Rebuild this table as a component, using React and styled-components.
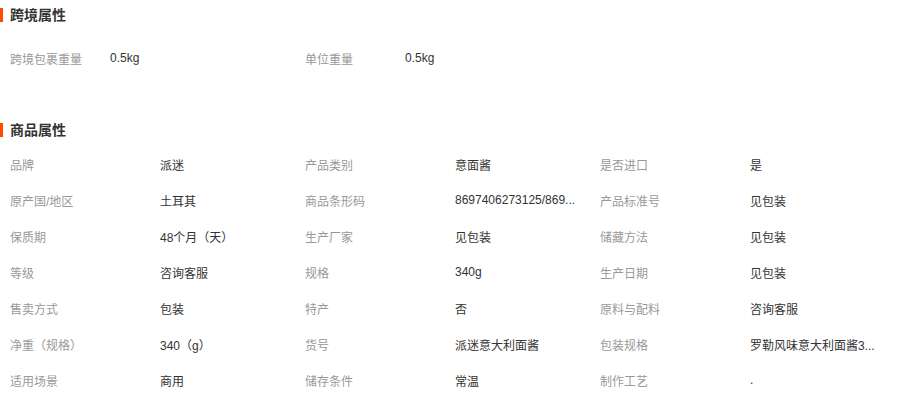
import React from "react";
import styled, { createGlobalStyle } from "styled-components";

const GlobalStyle = createGlobalStyle`
  body {
    margin: 0;
    background: #fff;
    font-family: "Liberation Sans", "Noto Sans CJK SC", sans-serif;
    font-size: 12px;
  }
`;

const Wrapper = styled.div`
  width: 898px;
`;

const SectionTitle = styled.div`
  position: relative;
  margin-top: ${(p) => p.top}px;
  padding-left: 10px;
  height: 14px;
  line-height: 14px;
  font-size: 14px;
  font-weight: bold;
  color: #333;
  &::before {
    content: "";
    position: absolute;
    left: 0;
    top: 0;
    width: 3px;
    height: 14px;
    background: #ff4a00;
  }
`;

const Grid = styled.div`
  display: grid;
  grid-template-columns: repeat(3, 295px);
  margin-top: ${(p) => p.top}px;
`;

const Cell = styled.div`
  display: flex;
  align-items: center;
  height: 36px;
  padding-left: 10px;
`;

const Label = styled.span`
  flex: 0 0 ${(p) => p.w}px;
  color: #999;
  white-space: nowrap;
`;

const Value = styled.span`
  max-width: 140px;
  color: #333;
  white-space: nowrap;
  overflow: hidden;
  text-overflow: ellipsis;
`;

const crossBorder = [
  ["跨境包裹重量", "0.5kg"],
  ["单位重量", "0.5kg"],
];

const goods = [
  ["品牌", "派迷"],
  ["产品类别", "意面酱"],
  ["是否进口", "是"],
  ["原产国/地区", "土耳其"],
  ["商品条形码", "8697406273125/869..."],
  ["产品标准号", "见包装"],
  ["保质期", "48个月（天）"],
  ["生产厂家", "见包装"],
  ["储藏方法", "见包装"],
  ["等级", "咨询客服"],
  ["规格", "340g"],
  ["生产日期", "见包装"],
  ["售卖方式", "包装"],
  ["特产", "否"],
  ["原料与配料", "咨询客服"],
  ["净重（规格）", "340（g）"],
  ["货号", "派迷意大利面酱"],
  ["包装规格", "罗勒风味意大利面酱3..."],
  ["适用场景", "商用"],
  ["储存条件", "常温"],
  ["制作工艺", "."],
];

export default function App() {
  return (
    <Wrapper>
      <GlobalStyle />
      <SectionTitle top={8}>跨境属性</SectionTitle>
      <Grid top={18}>
        {crossBorder.map(([k, v]) => (
          <Cell key={k}>
            <Label w={100}>{k}</Label>
            <Value>{v}</Value>
          </Cell>
        ))}
      </Grid>
      <SectionTitle top={47}>商品属性</SectionTitle>
      <Grid top={9}>
        {goods.map(([k, v]) => (
          <Cell key={k}>
            <Label w={150}>{k}</Label>
            <Value>{v}</Value>
          </Cell>
        ))}
      </Grid>
    </Wrapper>
  );
}
